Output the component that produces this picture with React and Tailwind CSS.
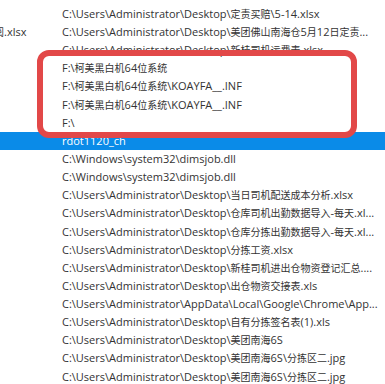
import React from "react";

const rows = [
  { t: "C:\\Users\\Administrator\\Desktop\\定责买赔\\5-14.xlsx" },
  { t: "C:\\Users\\Administrator\\Desktop\\美团佛山南海仓5月12日定责...", left: "阅.xlsx" },
  { t: "C:\\Users\\Administrator\\Desktop\\新桂司机运费表.xlsx" },
  { t: "F:\\柯美黑白机64位系统" },
  { t: "F:\\柯美黑白机64位系统\\KOAYFA__.INF" },
  { t: "F:\\柯美黑白机64位系统\\KOAYFA__.INF" },
  { t: "F:\\" },
  { t: "rdot1120_ch", sel: true },
  { t: "C:\\Windows\\system32\\dimsjob.dll" },
  { t: "C:\\Windows\\system32\\dimsjob.dll" },
  { t: "C:\\Users\\Administrator\\Desktop\\当日司机配送成本分析.xlsx" },
  { t: "C:\\Users\\Administrator\\Desktop\\仓库司机出勤数据导入-每天.xl..." },
  { t: "C:\\Users\\Administrator\\Desktop\\仓库分拣出勤数据导入-每天.xl..." },
  { t: "C:\\Users\\Administrator\\Desktop\\分拣工资.xlsx" },
  { t: "C:\\Users\\Administrator\\Desktop\\新桂司机进出仓物资登记汇总...." },
  { t: "C:\\Users\\Administrator\\Desktop\\出仓物资交接表.xls" },
  { t: "C:\\Users\\Administrator\\AppData\\Local\\Google\\Chrome\\App..." },
  { t: "C:\\Users\\Administrator\\Desktop\\自有分拣签名表(1).xls" },
  { t: "C:\\Users\\Administrator\\Desktop\\美团南海6S" },
  { t: "C:\\Users\\Administrator\\Desktop\\美团南海6S\\分拣区二.jpg" },
  { t: "C:\\Users\\Administrator\\Desktop\\美团南海6S\\分拣区二.jpg" },
];

function Mixed({ text }) {
  const parts = text.split(/([\u4e00-\u9fff]+)/);
  return (
    <span>
      {parts.map((p, i) =>
        /[\u4e00-\u9fff]/.test(p) ? (
          <span key={i} className="text-[10px]">
            {p}
          </span>
        ) : (
          <span key={i}>{p}</span>
        )
      )}
    </span>
  );
}

export default function App() {
  return (
    <div
      className="relative w-[385px] h-[384px] overflow-hidden bg-white text-[11px] text-[#333333]"
      style={{ fontFamily: '"Open Sans", "Noto Sans CJK SC", sans-serif' }}
    >
      <div className="flex flex-col pt-[5px]">
        {rows.map((r, i) => (
          <div
            key={i}
            className={
              "flex h-[18.15px] shrink-0 items-center whitespace-nowrap " +
              (r.sel ? "bg-[#0a8be8] text-white" : "")
            }
          >
            <div className="w-[62px] shrink-0 overflow-hidden">
              {r.left ? (
                <span className="ml-[-6px] block">
                  <Mixed text={r.left} />
                </span>
              ) : null}
            </div>
            <Mixed text={r.t} />
          </div>
        ))}
      </div>
      <div className="absolute left-[37px] top-[50px] w-[320px] h-[88px] rounded-[12px] border-[6px] border-[#e24848]" />
    </div>
  );
}
